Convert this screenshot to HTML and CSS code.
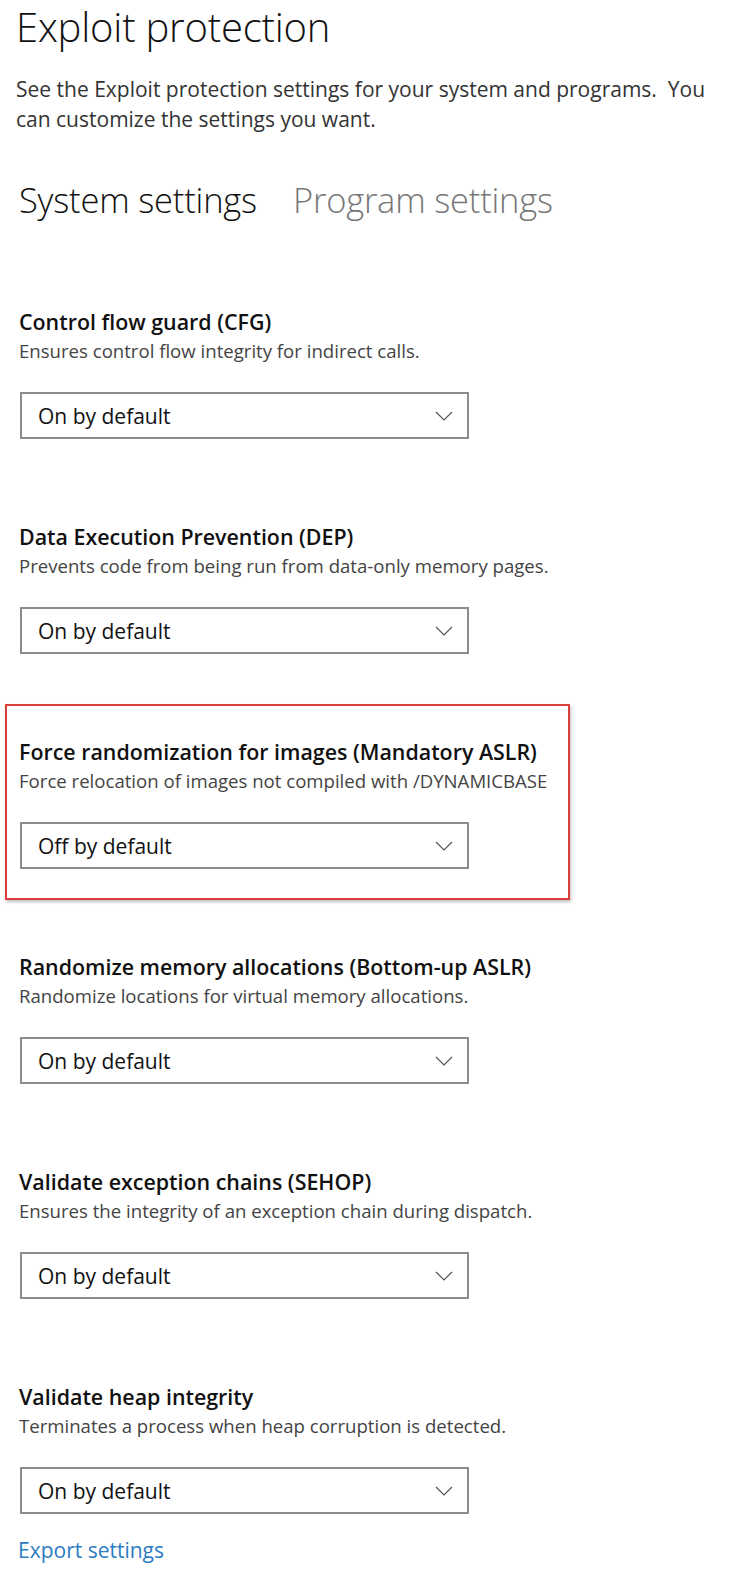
FILE: index.html
```html
<!DOCTYPE html>
<html lang="en">
<head>
<meta charset="utf-8">
<title>Exploit protection</title>
<link rel="stylesheet" href="styles.css">
</head>
<body>
<main class="page">
  <h1 class="title">Exploit protection</h1>
  <p class="intro">See the Exploit protection settings for your system and programs.&nbsp; You can customize the settings you want.</p>

  <nav class="tabs">
    <span class="tab active">System settings</span>
    <span class="tab">Program settings</span>
  </nav>

  <div class="settings">
    <section class="setting">
      <h2 class="setting-name">Control flow guard (CFG)</h2>
      <p class="setting-desc">Ensures control flow integrity for indirect calls.</p>
      <div class="select"><span>On by default</span><svg class="chev" width="18" height="10" viewBox="0 0 18 10"><polyline points="1,1 9,9 17,1" fill="none" stroke="#555" stroke-width="1.2"/></svg></div>
    </section>

    <section class="setting">
      <h2 class="setting-name">Data Execution Prevention (DEP)</h2>
      <p class="setting-desc">Prevents code from being run from data-only memory pages.</p>
      <div class="select"><span>On by default</span><svg class="chev" width="18" height="10" viewBox="0 0 18 10"><polyline points="1,1 9,9 17,1" fill="none" stroke="#555" stroke-width="1.2"/></svg></div>
    </section>

    <section class="setting highlighted">
      <h2 class="setting-name">Force randomization for images (Mandatory ASLR)</h2>
      <p class="setting-desc">Force relocation of images not compiled with /DYNAMICBASE</p>
      <div class="select"><span>Off by default</span><svg class="chev" width="18" height="10" viewBox="0 0 18 10"><polyline points="1,1 9,9 17,1" fill="none" stroke="#555" stroke-width="1.2"/></svg></div>
    </section>

    <section class="setting">
      <h2 class="setting-name">Randomize memory allocations (Bottom-up ASLR)</h2>
      <p class="setting-desc">Randomize locations for virtual memory allocations.</p>
      <div class="select"><span>On by default</span><svg class="chev" width="18" height="10" viewBox="0 0 18 10"><polyline points="1,1 9,9 17,1" fill="none" stroke="#555" stroke-width="1.2"/></svg></div>
    </section>

    <section class="setting">
      <h2 class="setting-name">Validate exception chains (SEHOP)</h2>
      <p class="setting-desc">Ensures the integrity of an exception chain during dispatch.</p>
      <div class="select"><span>On by default</span><svg class="chev" width="18" height="10" viewBox="0 0 18 10"><polyline points="1,1 9,9 17,1" fill="none" stroke="#555" stroke-width="1.2"/></svg></div>
    </section>

    <section class="setting">
      <h2 class="setting-name">Validate heap integrity</h2>
      <p class="setting-desc">Terminates a process when heap corruption is detected.</p>
      <div class="select"><span>On by default</span><svg class="chev" width="18" height="10" viewBox="0 0 18 10"><polyline points="1,1 9,9 17,1" fill="none" stroke="#555" stroke-width="1.2"/></svg></div>
    </section>
  </div>

  <a class="export" href="#">Export settings</a>
</main>
</body>
</html>
```

FILE: styles.css
```css
* { box-sizing: border-box; }

html, body {
  margin: 0;
  padding: 0;
  background: #ffffff;
}

body {
  font-family: "Open Sans", "Noto Sans", "Liberation Sans", sans-serif;
  color: #000;
}

.page {
  display: flex;
  flex-direction: column;
  padding: 0 0 0 16px;
}

.title {
  margin: 1px 0 0 0;
  font-size: 40px;
  font-weight: 300;
  line-height: 52px;
  color: #111;
  letter-spacing: -0.2px;
}

.intro {
  margin: 21px 0 0 0;
  width: 705px;
  font-size: 21px;
  line-height: 30px;
  color: #333;
}

.tabs {
  display: flex;
  gap: 36px;
  margin: 44px 0 0 3px;
}

.tab {
  font-size: 34.5px;
  font-weight: 300;
  line-height: 44px;
  color: #777;
  letter-spacing: -0.2px;
}

.tab.active {
  color: #111;
}

.settings {
  display: flex;
  flex-direction: column;
  gap: 84px;
  margin: 86px 0 0 3px;
}

.setting {
  position: relative;
  display: flex;
  flex-direction: column;
  width: 560px;
}

.setting-name {
  margin: 0;
  font-size: 21.4px;
  font-weight: 600;
  line-height: 28px;
  color: #111;
  white-space: nowrap;
}

.setting-desc {
  margin: 2px 0 0 0;
  font-size: 18.6px;
  line-height: 26px;
  color: #444;
  white-space: nowrap;
}

.select {
  display: flex;
  align-items: center;
  justify-content: space-between;
  width: 449px;
  height: 47px;
  margin: 28px 0 0 1px;
  padding: 0 14px 0 16px;
  border: 2px solid #8c8c8c;
  font-size: 21px;
  color: #111;
}

.chev {
  display: block;
}

.highlighted::before {
  content: "";
  position: absolute;
  left: -14px;
  top: -34px;
  width: 561px;
  height: 192px;
  border: 2px solid #d9403c;
  box-shadow: 1px 2px 3px rgba(0, 0, 0, 0.25);
  pointer-events: none;
}

.export {
  margin: 22px 0 0 2px;
  font-size: 21px;
  line-height: 28px;
  color: #2b7cc3;
  text-decoration: none;
  align-self: flex-start;
}
```
